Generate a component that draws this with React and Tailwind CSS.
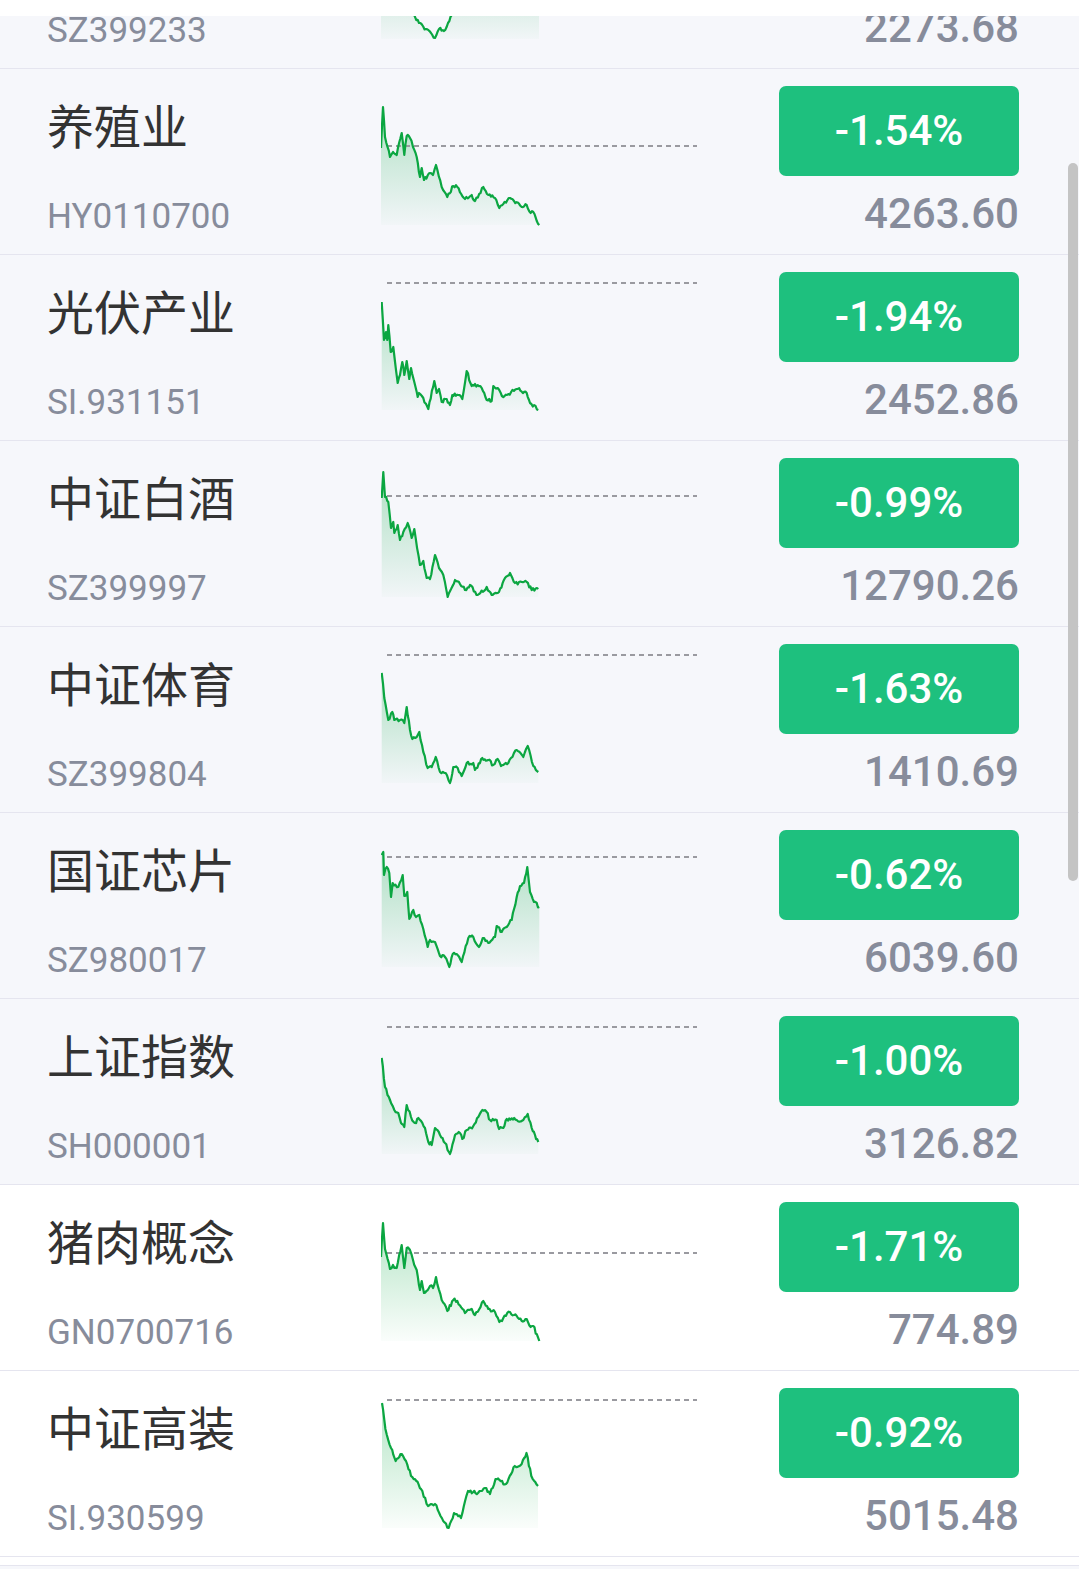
import React from 'react';

// keypoints: [x within chart, y within row], traced from the intraday charts
const rows = [
    {
        name: '', code: 'SZ399233', pct: '', value: '2273.68', light: true, dash: 20, base: 156,
        keys: [[0, 60], [8, 80], [15, 92], [24, 112], [30, 128], [38, 140], [45, 146], [50, 150], [54, 155], [58, 146], [63, 148], [67, 140], [72, 128], [85, 108], [100, 96], [120, 86], [140, 92], [158, 96]],
    },
    {
        name: '养殖业', code: 'HY0110700', pct: '-1.54%', value: '4263.60', light: true, dash: 77, base: 156,
        keys: [[0, 79], [2, 38], [4, 68], [9, 88], [12, 83], [15.7, 86], [20.7, 64], [23.3, 86], [25.7, 67], [29, 69], [32, 78], [35.7, 88], [39, 108], [40.7, 99], [43, 111], [49, 104], [52, 106], [55, 96], [60.7, 118], [66.3, 128], [72.3, 117], [76.3, 118], [84, 130], [90.7, 126], [94, 132], [102.3, 118], [107.3, 126], [114, 129], [118.3, 139], [122.3, 135], [129, 129], [133, 132], [140.7, 138], [145.7, 136], [149.7, 144], [152.3, 143], [158.3, 156]],
    },
    {
        name: '光伏产业', code: 'SI.931151', pct: '-1.94%', value: '2452.86', light: true, dash: 28, base: 155,
        keys: [[0.7, 47], [3, 85], [5, 77], [6.3, 85], [7.3, 70], [9.7, 97], [12.3, 92], [16.7, 128], [19, 120], [21.3, 107], [23.3, 120], [25.7, 106], [28.3, 124], [30, 113], [33.3, 127], [36.7, 142], [38, 138], [42.3, 143], [47.3, 154], [53.3, 126], [55.7, 138], [58, 134], [60.7, 147], [65.7, 144], [69, 150], [71.3, 140], [77.3, 140], [81.3, 144], [85.7, 116], [90.7, 131], [94, 129], [100.7, 133], [105.7, 145], [110.7, 146], [112.3, 131], [116.7, 133], [122.3, 142], [127.3, 139], [135.7, 134], [145.7, 138], [149, 148], [157.3, 155]],
    },
    {
        name: '中证白酒', code: 'SZ399997', pct: '-0.99%', value: '12790.26', light: true, dash: 55, base: 156,
        keys: [[0.7, 57], [2.3, 31], [4, 56], [7.3, 61], [10, 87], [12.3, 81], [13.3, 92], [16.7, 84], [19, 99], [22.3, 91], [26.7, 82], [30.7, 97], [33.3, 88], [39, 124], [42.3, 120], [45.7, 137], [49, 138], [54, 114], [58, 127], [62.3, 134], [66.7, 156], [74, 139], [79, 143], [84, 149], [89, 144], [96.7, 154], [105.7, 146], [110.7, 154], [118, 151], [124, 137], [129, 132], [134, 142], [140.7, 141], [145.7, 141], [150.7, 149], [157.3, 148]],
    },
    {
        name: '中证体育', code: 'SZ399804', pct: '-1.63%', value: '1410.69', light: true, dash: 28, base: 156,
        keys: [[0.7, 46], [3.3, 71], [7.3, 93], [11.3, 85], [13.3, 93], [19, 93], [23.3, 96], [25.7, 80], [29, 103], [31.3, 112], [35.7, 110], [38.3, 105], [42.3, 125], [46.7, 141], [50.7, 140], [54.7, 130], [59, 145], [64.7, 146], [69, 156], [72.3, 140], [76.7, 141], [80.7, 149], [85.7, 136], [92.3, 136], [94, 143], [101.3, 131], [107.3, 133], [112.3, 138], [116.7, 132], [120, 139], [127.3, 136], [135.7, 123], [142.3, 130], [146.7, 119], [152.3, 139], [157.3, 145]],
    },
    {
        name: '国证芯片', code: 'SZ980017', pct: '-0.62%', value: '6039.60', light: true, dash: 44, base: 154,
        keys: [[0.7, 42], [2.3, 39], [3, 62], [5.7, 54], [8.3, 60], [10, 84], [11.7, 70], [17.3, 74], [21.7, 62], [23.3, 83], [26.3, 79], [28.3, 106], [32.3, 97], [35, 104], [38.3, 102], [42.3, 116], [46.7, 134], [49, 127], [54, 129], [59, 143], [64, 144], [68.3, 154], [71.7, 141], [75.7, 141], [80.7, 149], [87.3, 125], [92.3, 124], [98, 134], [101.7, 125], [107.3, 130], [114, 124], [115.7, 113], [120.7, 119], [125.7, 114], [130.7, 107], [135.7, 84], [139, 73], [143, 70], [146.3, 54], [149, 79], [153, 89], [158.3, 94]],
    },
    {
        name: '上证指数', code: 'SH000001', pct: '-1.00%', value: '3126.82', light: true, dash: 28, base: 155,
        keys: [[0.7, 59], [4, 88], [9, 101], [13.3, 111], [17.3, 114], [20, 124], [23.3, 128], [25.7, 106], [30, 118], [34, 124], [37.3, 119], [44, 129], [47.3, 143], [50.7, 146], [54, 129], [59, 136], [64, 144], [69, 155], [74, 136], [79, 134], [81.3, 140], [85.7, 131], [92.3, 127], [97.3, 118], [101.3, 111], [105.7, 113], [109, 121], [115.7, 121], [118, 130], [122.3, 129], [125.7, 120], [135.7, 121], [142.3, 121], [146.7, 115], [150.7, 129], [154, 136], [157.3, 143]],
    },
    {
        name: '猪肉概念', code: 'GN0700716', pct: '-1.71%', value: '774.89', light: false, dash: 68, base: 156,
        keys: [[0, 72], [2, 38], [4, 64], [9, 84], [12, 80], [15.7, 83], [20.7, 60], [23.3, 83], [25.7, 63], [29, 65], [32, 75], [35.7, 85], [39, 105], [40.7, 96], [43, 108], [49, 101], [52, 103], [55, 92], [60.7, 115], [66.3, 126], [72.3, 115], [76.3, 116], [84, 128], [90.7, 124], [94, 130], [102.3, 116], [107.3, 124], [114, 127], [118.3, 137], [122.3, 133], [129, 127], [133, 130], [140.7, 136], [145.7, 134], [149.7, 142], [152.3, 141], [158.3, 156]],
    },
    {
        name: '中证高装', code: 'SI.930599', pct: '-0.92%', value: '5015.48', light: false, dash: 29, base: 157,
        keys: [[1, 32], [4.4, 58], [10, 77], [14.7, 90], [19.5, 83], [25, 90], [30, 105], [35.4, 110], [40, 118], [47, 135], [54, 133], [59.5, 145], [67.7, 157], [73, 142], [80, 147], [87, 120], [97, 122], [104, 117], [109, 123], [114.5, 108], [125, 113], [133.8, 95], [140.7, 93], [145.5, 82], [150.3, 105], [157, 115]],
    },
];

function makePoints(keys, seed) {
    let s = seed;
    const rand = () => {
        s = (s * 16807) % 2147483647;
        return (s - 1) / 2147483646;
    };
    const pts = [];
    for (let i = 0; i < keys.length - 1; i++) {
        const [x0, y0] = keys[i];
        const [x1, y1] = keys[i + 1];
        const n = Math.max(1, Math.round((x1 - x0) / 1.3));
        for (let j = 0; j < n; j++) {
            const t = j / n;
            let y = y0 + (y1 - y0) * t;
            if (j > 0) y += (rand() - 0.5) * 3.6;
            pts.push([x0 + (x1 - x0) * t, y]);
        }
    }
    pts.push(keys[keys.length - 1]);
    return pts;
}

const Spark = ({ row, idx }) => {
    const pts = makePoints(row.keys, 1234 + idx * 97);
    const line = pts.map((p, i) => `${i === 0 ? 'M' : 'L'}${p[0].toFixed(1)},${p[1].toFixed(1)}`).join(' ');
    const last = pts[pts.length - 1];
    const area = `${line} L${last[0].toFixed(1)},${row.base} L${pts[0][0].toFixed(1)},${row.base} Z`;
    const gid = `fill-${idx}`;
    return (
        <svg className="w-[316px] h-[185px] shrink-0" viewBox="0 0 316 185" width="316" height="185">
            <defs>
                <linearGradient id={gid} x1="0" y1="0" x2="0" y2="1">
                    <stop offset="0%" stopColor="#16ad4c" stopOpacity="0.32" />
                    <stop offset="100%" stopColor="#16ad4c" stopOpacity="0.02" />
                </linearGradient>
            </defs>
            <path d={area} fill={`url(#${gid})`} />
            <line x1="6" y1={row.dash} x2="316" y2={row.dash} stroke="#9a9aa0" strokeWidth="2" strokeDasharray="5 4" />
            <path d={line} fill="none" stroke="#0ba641" strokeWidth="2.2" strokeLinejoin="round" />
        </svg>
    );
};

const Row = ({ row, idx }) => (
    <div className={`flex h-[186px] border-b border-[#e5e5ef] ${row.light ? 'bg-[#f6f7fb]' : 'bg-white'} ${idx === 0 ? 'mt-[-133px]' : ''}`}>
        <div className="w-[381px] shrink-0 pl-[47px] flex flex-col">
            <div className="mt-[35px] h-[47px] text-[47px] leading-[47px] text-[#333333] whitespace-nowrap">{row.name}</div>
            <div className="mt-[48px] text-[35px] leading-[35px] text-[#878c9b] whitespace-nowrap">{row.code}</div>
        </div>
        <Spark row={row} idx={idx} />
        <div className="flex-1 flex flex-col items-end pr-[60px]">
            <div className="mt-[17px] w-[240px] h-[90px] rounded-[7px] bg-[#1ec07e] flex items-center justify-center text-white text-[42px] leading-none font-medium">
                {row.pct}
            </div>
            <div className="mt-[17px] text-[42px] leading-[42px] font-medium text-[#878c9b]">{row.value}</div>
        </div>
    </div>
);

export default function App() {
    return (
        <div className="relative w-full h-[1569px] overflow-hidden bg-white font-['Roboto','Noto_Sans_CJK_SC',sans-serif]">
            <div className="relative z-10 h-[16px] bg-white" />
            <div className="overflow-hidden">
                {rows.map((row, idx) => (
                    <Row key={row.code} row={row} idx={idx} />
                ))}
                <div className="h-[9px] bg-white border-b border-[#e5e5ef]" />
                <div className="h-[40px] bg-[#f6f7fb]" />
            </div>
            <div className="absolute left-[1068px] top-[163px] w-[10px] h-[718px] rounded-full bg-[#c4c4c4]" />
        </div>
    );
}
